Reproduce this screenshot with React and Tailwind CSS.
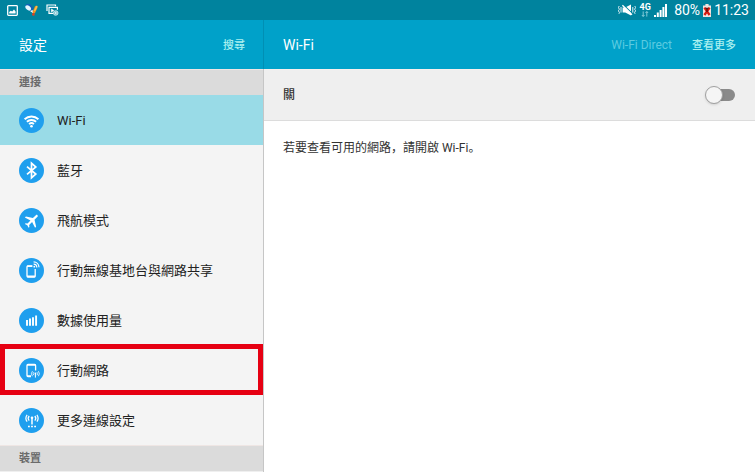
import React, { useState } from "react";

const stroke = {
  fill: "none",
  stroke: "white",
  strokeWidth: 1.6,
  strokeLinecap: "butt",
};

const icons = {
  wifi: (
    <g {...stroke} strokeWidth="1.9">
      <path d="M5.6 11.3a10 10 0 0 1 13.8 0" />
      <path d="M7.9 13.8a6.6 6.6 0 0 1 9.2 0" />
      <path d="M10.1 16.1a3.5 3.5 0 0 1 4.8 0" />
      <circle cx="12.5" cy="18.2" r="1.3" fill="white" stroke="none" />
    </g>
  ),
  bluetooth: (
    <path
      {...stroke}
      strokeWidth="1.7"
      d="M8 8.6l8.8 7.4-4.3 3.8V5.2l4.3 3.8L8 16.4"
    />
  ),
  plane: (
    <g transform="translate(13.1 12.5) rotate(45) scale(0.76) translate(-11.5 -12)">
      <path
        fill="white"
        d="M21 16v-2l-8-5V3.5c0-.83-.67-1.5-1.5-1.5S10 2.67 10 3.5V9l-8 5v2l8-2.5V19l-2 1.5V22l3.5-1 3.5 1v-1.5L13 19v-5.5l8 2.5z"
      />
    </g>
  ),
  hotspot: (
    <g {...stroke} strokeWidth="1.3">
      <path d="M13.3 7.8H9a1 1 0 0 0-1 1V18a1 1 0 0 0 1 1h6.2a1 1 0 0 0 1-1v-7" />
      <path d="M8 8.2h5.3M8 18.4h8.2" strokeWidth="1.6" />
      <path d="M14.6 6.2a3.2 3.2 0 0 1 3.2 3.2M14.6 3.8a5.6 5.6 0 0 1 5.4 5.4" strokeWidth="1.2" />
      <circle cx="15.3" cy="8.7" r="0.9" fill="white" stroke="none" />
    </g>
  ),
  data: (
    <path
      {...stroke}
      strokeWidth="1.9"
      d="M8 17.8V12M11 17.8v-7.4M14 17.8V9.2M17.1 17.8V7.6"
    />
  ),
  mobile: (
    <g {...stroke} strokeWidth="1.3">
      <path d="M12 18.6H9a1 1 0 0 1-1-1V7.4a1 1 0 0 1 1-1h6.6a1 1 0 0 1 1 1v5" />
      <path d="M8 6.9h8.6M8 18h4" strokeWidth="1.5" />
      <path d="M16.4 15.6v4" strokeWidth="1" />
      <path
        d="M14.8 17.2a2.2 2.2 0 0 1 0-3M18 17.2a2.2 2.2 0 0 0 0-3M13.4 18.2a4 4 0 0 1 0-5M19.4 18.2a4 4 0 0 0 0-5"
        strokeWidth="0.8"
      />
      <circle cx="16.4" cy="15.4" r="0.9" fill="white" stroke="none" />
    </g>
  ),
  more: (
    <g {...stroke} strokeWidth="1.2">
      <path d="M10.2 12.6a3.4 3.4 0 0 1 0-4.6M15.8 12.6a3.4 3.4 0 0 0 0-4.6" />
      <path d="M8.1 13.6a5.8 5.8 0 0 1 0-6.8M17.9 13.6a5.8 5.8 0 0 0 0-6.8" />
      <path d="M13 10v6.4" strokeWidth="1.5" />
      <circle cx="13" cy="9.8" r="1.3" fill="white" stroke="none" />
      <path d="M9 18.4h1.8M12.1 18.4h1.8M15.2 18.4H17" strokeWidth="1.5" />
    </g>
  ),
};

const items = [
  { id: "wifi", label: "Wi-Fi" },
  { id: "bluetooth", label: "藍牙" },
  { id: "plane", label: "飛航模式" },
  { id: "hotspot", label: "行動無線基地台與網路共享" },
  { id: "data", label: "數據使用量" },
  { id: "mobile", label: "行動網路", marked: true },
  { id: "more", label: "更多連線設定" },
];

function StatusBar() {
  return (
    <div className="flex h-5 items-center justify-between bg-[#00839e] pr-1.5 pl-[7px] text-white">
      <div className="flex items-center gap-[7px]">
        <svg width="11" height="11" viewBox="0 0 11 11" aria-hidden="true">
          <rect x="0.7" y="0.7" width="9.6" height="9.6" rx="0.8" fill="none" stroke="white" strokeWidth="1.3" />
          <path d="M2.2 8.4V7l1.6-1.3 1.4.8 1.8-2 1.6 1.9v2z" fill="white" />
        </svg>
        <svg width="14" height="12" viewBox="0 0 14 12" aria-hidden="true">
          <ellipse cx="4.4" cy="3.4" rx="4.4" ry="2.8" fill="#1261b5" transform="rotate(40 4.4 3.4)" />
          <ellipse cx="3.2" cy="3.9" rx="3.2" ry="2.1" fill="#e4f6ff" transform="rotate(40 3.2 3.9)" />
          <path d="M5 7l3.2 2.2L7.6 6z" fill="white" />
          <path d="M9 8L11.2 3.2" stroke="#f39221" strokeWidth="2.8" strokeLinecap="round" />
          <path d="M9.8 6.4l2-4" stroke="#fbc04b" strokeWidth="1.4" strokeLinecap="round" />
          <circle cx="8.4" cy="10.4" r="1.3" fill="#e2401f" />
        </svg>
        <svg width="13" height="12" viewBox="0 0 13 12" aria-hidden="true" fill="none" stroke="white">
          <path d="M1 7V1h8.5v1.2" strokeWidth="1.2" />
          <path d="M7 9.4H3V3.4h8.4v2.4" strokeWidth="1.2" />
          <path d="M5.4 5v3l2.4-1.5z" fill="white" strokeWidth="0.6" />
          <circle cx="9.7" cy="9" r="2.3" fill="#7fc4d2" stroke="#d5edf2" strokeWidth="0.8" />
          <circle cx="9.7" cy="9" r="0.8" fill="white" stroke="none" />
        </svg>
      </div>
      <div className="flex items-center">
        <svg width="18" height="14" viewBox="0 0 18 14" aria-hidden="true" fill="none" stroke="white">
          <path d="M4.6 4.6h2.6L13 1.4v11.2L7.2 9.6H4.6z" fill="white" stroke="none" />
          <path d="M5 1.4l10 9.8" stroke="#00839e" strokeWidth="1.1" />
          <path d="M4.4 2.2l9.6 9.6" strokeWidth="1.3" />
          <path d="M1.2 3l-.8 1.6 1 1.6-1 1.6 1 1.6-.4 1.4M3 4v5.6M14.8 4v5.6M16.8 3l.8 1.6-1 1.6 1 1.6-1 1.6.4 1.4" strokeWidth="0.9" />
        </svg>
        <div className="ml-[3px] flex w-3 flex-col items-center">
          <span className="text-[9px] leading-[8px] font-bold">4G</span>
          <svg width="8" height="6" viewBox="0 0 8 6" aria-hidden="true" fill="none" stroke="#8fd0de" strokeWidth="0.9">
            <path d="M2.2 0.4v5M0.9 4l1.3 1.5L3.5 4M5.8 5.6v-5M4.5 2l1.3-1.5L7.1 2" />
          </svg>
        </div>
        <svg className="mt-px ml-[3px]" width="13" height="13" viewBox="0 0 13 13" aria-hidden="true">
          <path d="M0 13v-2h2v2zM2.8 13V8.6h2V13zM5.6 13V6h2v7zM8.4 13V3h2v10zM11 13V0h2v13z" fill="white" />
        </svg>
        <span className="ml-[7px] text-sm leading-5">80%</span>
        <svg className="ml-[3px]" width="8" height="13" viewBox="0 0 8 13" aria-hidden="true">
          <path d="M2.4 0h3.2v1.6H8V13H0V1.6h2.4z" fill="#f1e3df" />
          <path d="M1.4 3.6L6.6 11M6.6 3.6L1.4 11" stroke="#d71a10" strokeWidth="2.3" />
          <path d="M2.6 4.2h2.8M4 4v4" stroke="#3a1010" strokeWidth="1.1" />
        </svg>
        <span className="ml-[3px] text-sm leading-5">11:23</span>
      </div>
    </div>
  );
}

function SectionTitle({ children }) {
  return (
    <h2 className="flex h-[26px] items-center border-t border-[#efe6e4] bg-[#dbdbdb] pt-px pl-[19px] text-[11px] font-bold text-[#6b6b6b]">
      {children}
    </h2>
  );
}

function Row({ item, selected, onSelect }) {
  return (
    <li className="relative">
      <button
        type="button"
        onClick={onSelect}
        className={`flex h-[50px] w-full items-center gap-3 pt-0.5 pl-[19px] text-left text-[13px] text-[#222] ${
          selected ? "bg-[#99dbe7]" : ""
        }`}
      >
        <svg width="26" height="26" viewBox="0 0 26 26" aria-hidden="true">
          <circle cx="12.5" cy="12.5" r="12.5" fill="#1f9fee" />
          {icons[item.id]}
        </svg>
        {item.label}
      </button>
      {item.marked && (
        <span className="pointer-events-none absolute inset-x-0 -top-px bottom-0 border-5 border-[#e60012]" />
      )}
    </li>
  );
}

export default function App() {
  const [current, setCurrent] = useState("wifi");
  const [on, setOn] = useState(false);

  return (
    <div className="flex min-h-screen flex-col bg-white font-[Roboto,'Noto_Sans_CJK_TC',sans-serif]">
      <StatusBar />
      <div className="flex grow">
        <aside className="flex w-[264px] shrink-0 flex-col border-r border-[#c6c6c6] bg-[#f4f4f4]">
          <header className="-mr-px flex h-[49px] items-center justify-between border-r border-[#008fb4] bg-[#00a1c9] pr-[18px] pl-[19px] text-white">
            <h1 className="text-sm">設定</h1>
            <button type="button" className="pt-1 text-[11px] font-medium text-[#a9f0f0]">
              搜尋
            </button>
          </header>
          <SectionTitle>連接</SectionTitle>
          <ul>
            {items.map((item) => (
              <Row
                key={item.id}
                item={item}
                selected={item.id === current}
                onSelect={() => setCurrent(item.id)}
              />
            ))}
          </ul>
          <div className="grow border-b border-[#efefef] bg-[#dbdbdb]">
            <SectionTitle>裝置</SectionTitle>
          </div>
        </aside>
        <main className="min-w-0 grow">
          <header className="flex h-[49px] items-center bg-[#00a1c9] pr-[19px] pl-[19px] text-white">
            <h1 className="grow text-sm">Wi-Fi</h1>
            <button type="button" disabled className="text-xs text-[#5ccbe0]">
              Wi-Fi Direct
            </button>
            <button type="button" className="ml-5 pt-1 text-[11px] font-medium text-[#a9f0f0]">
              查看更多
            </button>
          </header>
          <label className="flex h-[52px] items-center justify-between border-t border-b border-t-[#f8f0ee] border-b-[#dcdcdc] bg-[#efefef] pr-5 pl-[19px] text-xs font-medium text-[#333]">
            {on ? "開" : "關"}
            <span className="relative flex h-5 w-[30px] items-center justify-end">
              <input
                type="checkbox"
                role="switch"
                checked={on}
                onChange={(e) => setOn(e.target.checked)}
                className="h-3 w-6 appearance-none rounded-full bg-[#8a8a8a] checked:bg-[#00a1c9]"
              />
              <span
                className={`pointer-events-none absolute top-px size-[18px] rounded-full border border-[#a0a0a0] bg-[#f5f5f5] shadow-sm ${
                  on ? "right-0" : "left-0"
                }`}
              />
            </span>
          </label>
          <p className="px-[19px] pt-[18px] font-[Roboto,'Noto_Sans_CJK_SC',sans-serif] text-xs leading-[18px] text-[#333]">
            若要查看可用的網路，請開啟 Wi-Fi。
          </p>
        </main>
      </div>
    </div>
  );
}
